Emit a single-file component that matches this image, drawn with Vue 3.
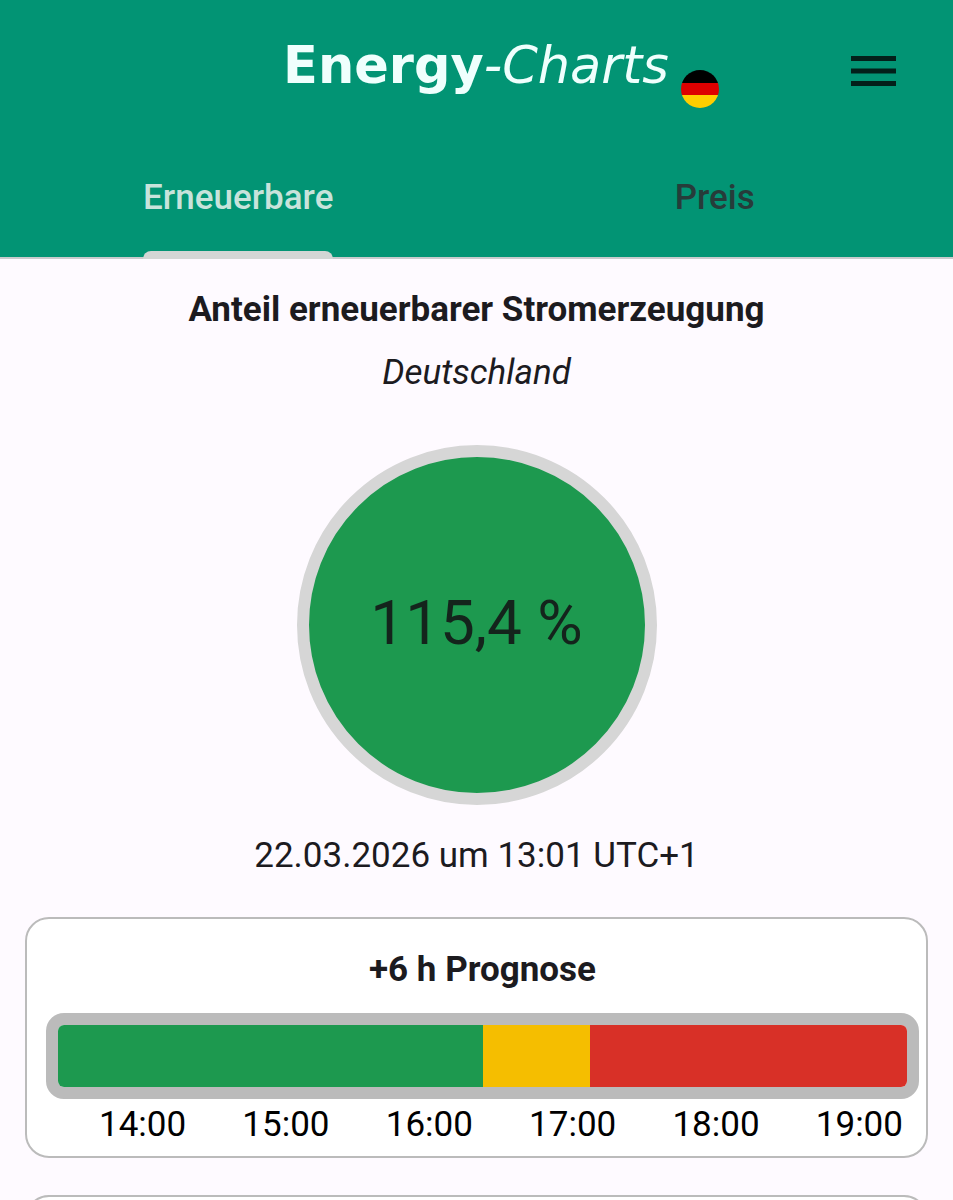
<script setup>
import { ref } from "vue";

const tabs = ["Erneuerbare", "Preis"];
const activeTab = ref("Erneuerbare");

const share = "115,4 %";
const updated = "22.03.2026 um 13:01 UTC+1";

// Share of the forecast window per traffic light colour
const forecast = [
  { level: "high", width: 50 },
  { level: "medium", width: 12.7 },
  { level: "low", width: 37.3 },
];
const hours = ["14:00", "15:00", "16:00", "17:00", "18:00", "19:00"];
</script>

<template>
  <div class="app">
    <header class="header">
      <div class="topbar">
        <div class="brand">
          <span class="logo"><b>Energy</b><i>-Charts</i></span>
          <button class="flag" type="button" aria-label="Deutschland">
            <svg viewBox="0 0 38 38" width="38" height="38">
              <clipPath id="flag-clip"><circle cx="19" cy="19" r="19" /></clipPath>
              <g clip-path="url(#flag-clip)">
                <rect width="38" height="13" fill="#000" />
                <rect y="13" width="38" height="12" fill="#dd0000" />
                <rect y="25" width="38" height="13" fill="#ffce00" />
              </g>
            </svg>
          </button>
        </div>
        <button class="menu" type="button" aria-label="Menü">
          <svg viewBox="0 0 45 30" width="45" height="30" fill="#03201a">
            <rect width="45" height="5" />
            <rect y="12.5" width="45" height="5" />
            <rect y="25" width="45" height="5" />
          </svg>
        </button>
      </div>

      <nav class="tabs">
        <button
          v-for="tab in tabs"
          :key="tab"
          class="tab"
          :class="{ active: tab === activeTab }"
          type="button"
          @click="activeTab = tab"
        >
          <span>{{ tab }}</span>
        </button>
      </nav>
    </header>

    <main class="content">
      <h1 class="title">Anteil erneuerbarer Stromerzeugung</h1>
      <p class="country">Deutschland</p>
      <div class="gauge">{{ share }}</div>
      <p class="updated">{{ updated }}</p>

      <section class="card">
        <h2 class="title">+6 h Prognose</h2>
        <div class="bar">
          <div
            v-for="part in forecast"
            :key="part.level"
            :class="part.level"
            :style="{ width: part.width + '%' }"
          ></div>
        </div>
        <div class="hours">
          <span v-for="hour in hours" :key="hour">{{ hour }}</span>
        </div>
      </section>

      <section class="card next"></section>
    </main>
  </div>
</template>

<style>
html {
  height: 100%;
  background-color: #fefaff;
}

body {
  height: 100%;
  margin: 0;
  overflow: hidden;
}

#app {
  height: 100%;
}
</style>

<style scoped>
* {
  box-sizing: border-box;
}

.app {
  height: 100%;
  overflow: hidden;
  font-family: Roboto, sans-serif;
  font-size: 35px;
  line-height: 40px;
  color: #1c1b1f;
  background-color: #fefaff;
}

button {
  border: none;
  padding: 0;
  background: none;
  font: inherit;
  cursor: pointer;
}

svg {
  display: block;
}

/* HEADER */
.header {
  background-color: #029474;
  border-bottom: 2px solid #c9cbcd;
}

.topbar {
  display: grid;
  grid-template-columns: 1fr auto 1fr;
  align-items: center;
  height: 142px;
  padding: 0 57px 0 106px;
}

.brand {
  display: flex;
  grid-column: 2;
  align-items: flex-end;
  gap: 12px;
  padding-top: 2px;
}

.logo {
  padding-bottom: 12px;
  font-family: "DejaVu Sans", sans-serif;
  font-size: 51px;
  line-height: 60px;
  white-space: nowrap;
  color: #effffd;
}

.menu {
  justify-self: end;
}

.tabs {
  display: grid;
  grid-template-columns: 1fr 1fr;
  height: 115px;
}

.tab {
  display: flex;
  justify-content: center;
  font-weight: 500;
  color: #263c3a;
}

.tab span {
  display: flex;
  flex-direction: column;
  justify-content: space-between;
  height: 117px;
  padding-top: 36px;
}

.tab.active {
  color: #c8e3db;
}

.tab.active span::after {
  content: "";
  height: 8px;
  border-radius: 8px 8px 0 0;
  background-color: #d3d6d5;
}

/* CONTENT */
.content {
  display: flex;
  flex-direction: column;
  align-items: center;
  padding: 31px 25px 0;
}

.title {
  margin: 0;
  font-size: 35px;
  font-weight: 700;
  text-align: center;
}

.country {
  margin: 23px 0 52px;
  font-style: italic;
}

.gauge {
  display: flex;
  align-items: center;
  justify-content: center;
  width: 360px;
  height: 360px;
  padding-bottom: 4px;
  border: 12px solid #d6d6d6;
  border-radius: 50%;
  font-size: 62px;
  color: #14241c;
  background-color: #1d994f;
}

.updated {
  margin: 31px 0 41px;
}

.card {
  width: 100%;
  padding: 31px 7px 11px 19px;
  border: 2px solid #bbbbbb;
  border-radius: 24px;
  background-color: #ffffff;
}

.bar {
  display: flex;
  height: 86px;
  margin-top: 23px;
  border: 12px solid #bbbbbb;
  border-radius: 18px;
  overflow: hidden;
}

.high {
  background-color: #1d994f;
}

.medium {
  background-color: #f5be00;
}

.low {
  background-color: #d83027;
}

.hours {
  display: flex;
  justify-content: space-between;
  padding: 6px 16px 0 53px;
  color: #000000;
}

.next {
  height: 240px;
  margin-top: 37px;
}
</style>
